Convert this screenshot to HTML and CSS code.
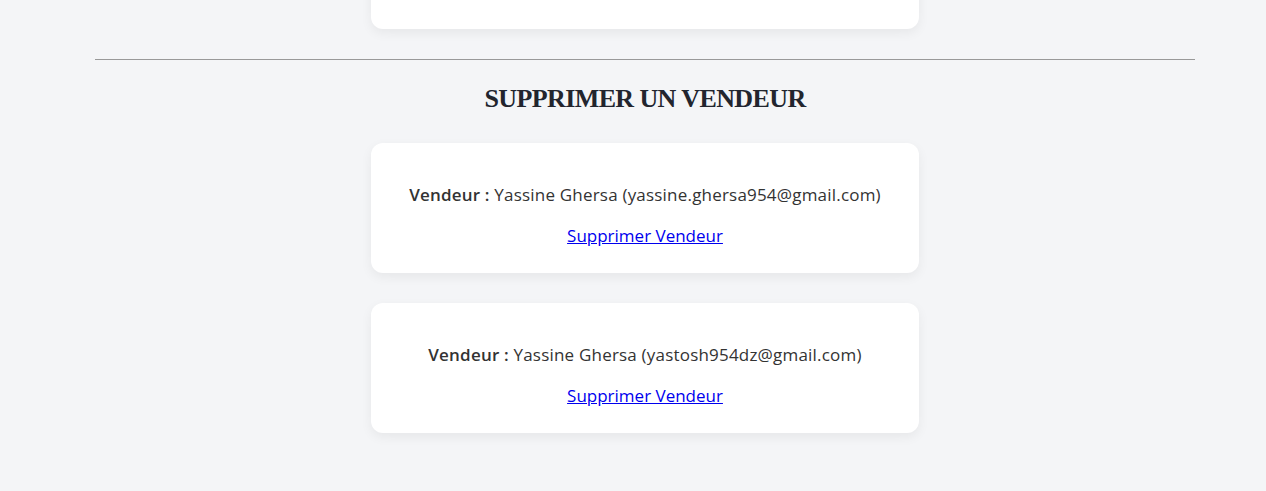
FILE: index.html
```html
<!DOCTYPE html>
<html lang="fr">
<head>
<meta charset="utf-8">
<title>Supprimer un vendeur</title>
<link rel="stylesheet" href="styles.css">
</head>
<body>
<main class="page">
  <div class="card card-top"></div>
  <hr class="divider">
  <h2 class="section-title">Supprimer un vendeur</h2>
  <div class="list">
    <div class="card">
      <p class="seller"><strong>Vendeur :</strong> Yassine Ghersa (yassine.ghersa954@gmail.com)</p>
      <a class="delete-link" href="#">Supprimer Vendeur</a>
    </div>
    <div class="card">
      <p class="seller"><strong>Vendeur :</strong> Yassine Ghersa (yastosh954dz@gmail.com)</p>
      <a class="delete-link" href="#">Supprimer Vendeur</a>
    </div>
  </div>
</main>
</body>
</html>
```
FILE: styles.css
```css
html, body {
  margin: 0;
  padding: 0;
  background: #f4f5f7;
  height: 100%;
  overflow: hidden;
}
body {
  font-family: "Open Sans", "DejaVu Sans", sans-serif;
  color: #333333;
  font-size: 17px;
  letter-spacing: 0.2px;
}
.page {
  width: 1100px;
  margin-left: 95px;
  display: flex;
  flex-direction: column;
  align-items: center;
}
.card {
  box-sizing: border-box;
  width: 548px;
  background: #ffffff;
  border-radius: 12px;
  box-shadow: 0 4px 12px rgba(0, 0, 0, 0.06);
  padding: 24px 24px 25px;
  text-align: center;
}
.card-top {
  height: 80px;
  margin-top: -51px;
}
.divider {
  width: 100%;
  border: 0;
  border-top: 1px solid #999999;
  margin: 30px 0 0;
}
.section-title {
  font-family: "Liberation Serif", serif;
  font-weight: 700;
  font-size: 26px;
  letter-spacing: -0.6px;
  text-transform: uppercase;
  color: #22252e;
  margin: 24px 0 29px;
  line-height: 30px;
}
.list {
  display: flex;
  flex-direction: column;
  gap: 30px;
  align-items: center;
}
.seller {
  margin: 16px 0 17px;
  line-height: 24px;
}
.seller strong {
  font-weight: 600;
}
.delete-link {
  color: #0000ee;
  line-height: 24px;
  letter-spacing: 0;
}
```
